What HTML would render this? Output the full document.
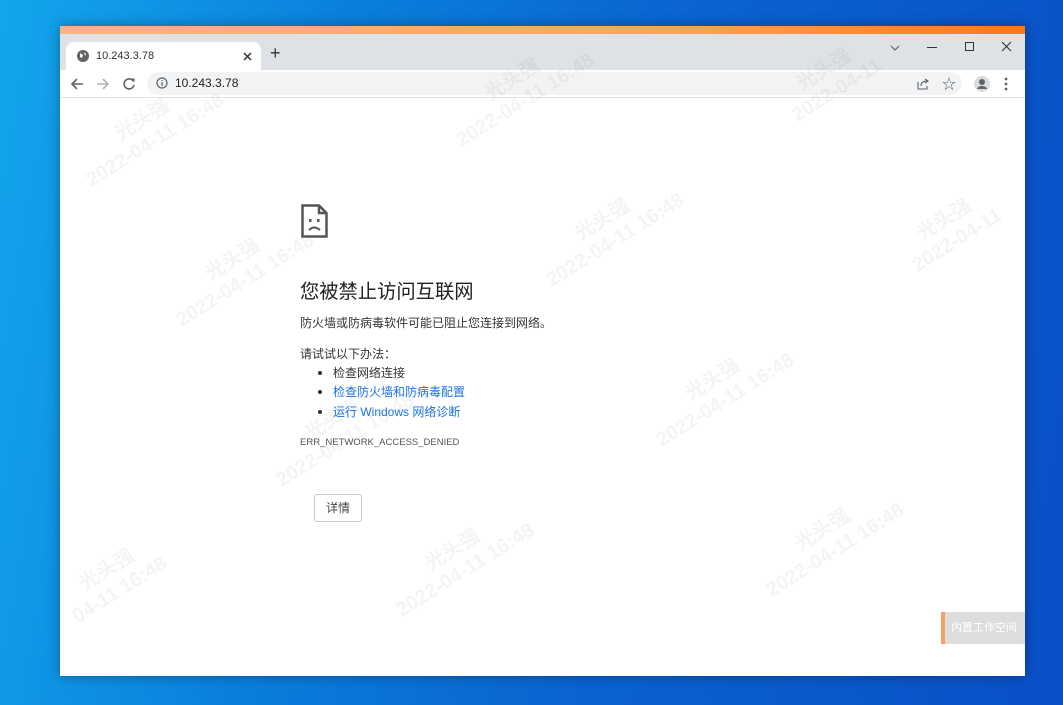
<!DOCTYPE html>
<html><head><meta charset="utf-8"><style>
*{margin:0;padding:0;box-sizing:border-box}
body{width:1063px;height:705px;overflow:hidden;position:relative;font-family:"Liberation Sans","Noto Sans CJK SC",sans-serif;
background:linear-gradient(100deg,#13a6ec 0%,#0a7fdc 30%,#0a62d0 60%,#0a4fc8 100%);}
.win{position:absolute;left:60px;top:26px;width:965px;height:650px;background:#fff;box-shadow:0 0 12px rgba(0,0,0,.35)}
.top{height:8px;background:linear-gradient(90deg,#fbb37f,#fba666 60%,#f7781f)}
.tabbar{height:36px;background:#dee1e6;position:relative}
.tab{position:absolute;left:6px;top:8px;width:195px;height:28px;background:#fff;border-radius:8px 8px 0 0;font-size:11px;color:#333}
.toolbar{height:28px;background:#fff;position:relative;border-bottom:1px solid #e3e3e3}
.omni{position:absolute;left:87px;top:2px;width:815px;height:23px;background:#f1f3f4;border-radius:12px;font-size:12px;color:#222}
.ic{position:absolute;color:#5f6368}
.c{position:absolute;color:#333;font-size:12px}
.wm{position:absolute;color:rgba(0,0,0,.045);font-size:20px;transform:rotate(-32deg);white-space:nowrap;font-weight:bold;line-height:24px;text-align:center}
a{color:#1a73e8;text-decoration:none}
.li{position:absolute;left:273px;font-size:12px;color:#333}
.dot{position:absolute;left:258px;width:4px;height:4px;border-radius:2px;background:#333}
</style></head><body>
<div class="win">
<div class="top"></div>
<div class="tabbar">
 <div class="tab">
  <svg style="position:absolute;left:11px;top:8px" width="12" height="12" viewBox="0 0 12 12"><circle cx="6" cy="6" r="6" fill="#5f6368"/><path d="M3 3 L6 5 L5 8 L3 7Z M7 2 L9 4 L8 6Z" fill="#fff"/></svg>
  <span style="position:absolute;left:30px;top:8px">10.243.3.78</span>
  <svg style="position:absolute;left:177px;top:10px" width="9" height="9"><path d="M1 1 L8 8 M8 1 L1 8" stroke="#333" stroke-width="1.5"/></svg>
 </div>
 <span class="ic" style="left:210px;top:9px;font-size:18px;color:#333">+</span>
 <svg class="ic" style="left:829px;top:8px" width="12" height="12"><path d="M2 4 L6 8 L10 4" stroke="#5f6368" fill="none" stroke-width="1.2"/></svg>
 <div style="position:absolute;left:867px;top:13px;width:10px;height:1px;background:#333"></div>
 <div style="position:absolute;left:905px;top:8px;width:9px;height:9px;border:1px solid #333"></div>
 <svg style="position:absolute;left:941px;top:7px" width="11" height="11"><path d="M1 1 L10 10 M10 1 L1 10" stroke="#333" stroke-width="1.1"/></svg>
</div>
<div class="toolbar">
 <svg style="position:absolute;left:10px;top:7px" width="14" height="14"><path d="M13 7H2 M7 2 L2 7 L7 12" stroke="#5f6368" stroke-width="1.6" fill="none"/></svg>
 <svg style="position:absolute;left:36px;top:7px" width="14" height="14"><path d="M1 7H12 M7 2 L12 7 L7 12" stroke="#b0b3b7" stroke-width="1.6" fill="none"/></svg>
 <svg style="position:absolute;left:62px;top:7px" width="14" height="14"><path d="M11.5 4.5 A5 5 0 1 0 12 8" stroke="#5f6368" stroke-width="1.6" fill="none"/><path d="M9 1.5 L12.5 1.5 L12.5 5Z" fill="#5f6368"/></svg>
 <div class="omni">
  <svg style="position:absolute;left:9px;top:5px" width="12" height="12"><circle cx="6" cy="6" r="5" stroke="#5f6368" fill="none" stroke-width="1.2"/><path d="M6 5V9 M6 3V4" stroke="#5f6368" stroke-width="1.2"/></svg>
  <span style="position:absolute;left:28px;top:4px">10.243.3.78</span>
  <svg style="position:absolute;left:769px;top:5px" width="14" height="13"><path d="M2 5V12H11V9 M5 9 C5 5 8 4 11 4 M9 2 L12 4 L9 6" stroke="#5f6368" fill="none" stroke-width="1.1"/></svg>
  <span style="position:absolute;left:795px;top:2px;font-size:14px;color:#5f6368">☆</span>
 </div>
 <svg style="position:absolute;left:914px;top:6px" width="16" height="16"><circle cx="8" cy="8" r="8" fill="#dadce0"/><circle cx="8" cy="6" r="3" fill="#5f6368"/><path d="M3 13 C4 9 12 9 13 13Z" fill="#5f6368"/></svg>
 <svg style="position:absolute;left:944px;top:7px" width="4" height="14"><circle cx="2" cy="2" r="1.4" fill="#5f6368"/><circle cx="2" cy="7" r="1.4" fill="#5f6368"/><circle cx="2" cy="12" r="1.4" fill="#5f6368"/></svg>
</div>
<div class="wm" style="left:10px;top:80px">光头强<br>2022-04-11 16:48</div>
<div class="wm" style="left:380px;top:40px">光头强<br>2022-04-11 16:48</div>
<div class="wm" style="left:720px;top:30px">光头强<br>2022-04-11</div>
<div class="wm" style="left:100px;top:220px">光头强<br>2022-04-11 16:48</div>
<div class="wm" style="left:470px;top:180px">光头强<br>2022-04-11 16:48</div>
<div class="wm" style="left:840px;top:180px">光头强<br>2022-04-11</div>
<div class="wm" style="left:200px;top:380px">光头强<br>2022-04-11 16:48</div>
<div class="wm" style="left:580px;top:340px">光头强<br>2022-04-11 16:48</div>
<div class="wm" style="left:0px;top:530px">光头强<br>04-11 16:48</div>
<div class="wm" style="left:320px;top:510px">光头强<br>2022-04-11 16:48</div>
<div class="wm" style="left:690px;top:490px">光头强<br>2022-04-11 16:48</div>
<svg style="position:absolute;left:241px;top:178px" width="27" height="34" viewBox="0 0 27 34"><path d="M1.5 1.5H18L25.5 9V32.5H1.5Z M18 1.5V9H25.5" stroke="#555" stroke-width="2.5" fill="none"/><rect x="8" y="15" width="2.5" height="3" fill="#555"/><rect x="16" y="15" width="2.5" height="3" fill="#555"/><path d="M8 26 Q13 21 19 26" stroke="#555" stroke-width="2" fill="none"/></svg>
<div class="c" style="left:240px;top:250px;font-size:19.3px;color:#202124">您被禁止访问互联网</div>
<div class="c" style="left:240px;top:288px">防火墙或防病毒软件可能已阻止您连接到网络。</div>
<div class="c" style="left:240px;top:319px">请试试以下办法：</div>
<div class="dot" style="top:345px"></div><div class="li" style="top:338px">检查网络连接</div>
<div class="dot" style="top:364px"></div><div class="li" style="top:357px"><a>检查防火墙和防病毒配置</a></div>
<div class="dot" style="top:384px"></div><div class="li" style="top:377px"><a>运行 Windows 网络诊断</a></div>
<div class="c" style="left:240px;top:411px;font-size:9.5px;color:#555">ERR_NETWORK_ACCESS_DENIED</div>
<div style="position:absolute;left:254px;top:468px;width:48px;height:28px;border:1px solid #c8c8c8;border-radius:3px;font-size:12px;color:#444;text-align:center;line-height:26px">详情</div>
<div style="position:absolute;left:881px;top:586px;width:84px;height:32px;background:#ddd;border-left:4px solid #f9a06a;color:#fff;font-size:11px;line-height:32px;padding-left:6px">内置工作空间</div>
</div>
</body></html>
